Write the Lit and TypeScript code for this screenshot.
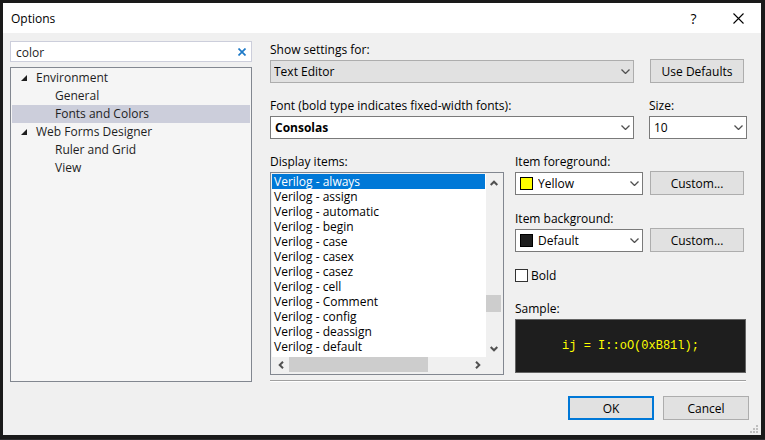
import { LitElement, html, css, svg } from "lit";
import { customElement, property } from "lit/decorators.js";

const chevron = svg`<path d="M0.5 0.5 L4.5 4.5 L8.5 0.5" />`;

@customElement("combo-box")
class ComboBox extends LitElement {
  @property() label = "";
  @property() value = "";
  @property() swatch = "";
  @property({ type: Boolean }) muted = false;
  @property({ type: Boolean }) strong = false;

  static styles = css`
    :host { display: flex; flex-direction: column; gap: 1px; min-width: 0; }
    label { line-height: 18px; white-space: nowrap; }
    .box { position: relative; display: grid; }
    select {
      appearance: none; box-sizing: border-box; width: 100%; height: 23px; margin: 0;
      padding: 0 20px 0 4px; border: 1px solid #7a7a7a; border-radius: 0;
      background: #fff; color: #000; font: inherit; outline: none;
    }
    .muted { background: #e1e1e1; border-color: #adadad; padding-left: 3px; }
    .strong { font-weight: 700; }
    .swatched { padding-left: 22px; }
    .arrow {
      position: absolute; right: 4px; top: 9px; width: 9px; height: 5px;
      fill: none; stroke: #505050; stroke-width: 1.3; pointer-events: none;
    }
    .chip {
      position: absolute; left: 5px; top: 5px; width: 11px; height: 11px;
      border: 1px solid #000; pointer-events: none;
    }
  `;

  render() {
    const cls = [this.muted ? "muted" : "", this.strong ? "strong" : "", this.swatch ? "swatched" : ""].join(" ");
    return html`
      <label for="s">${this.label}</label>
      <div class="box">
        <select id="s" class=${cls}><option>${this.value}</option></select>
        ${this.swatch ? html`<span class="chip" style="background:${this.swatch}"></span>` : ""}
        <svg class="arrow" viewBox="0 0 9 5">${chevron}</svg>
      </div>`;
  }
}

const items = ["always", "assign", "automatic", "begin", "case", "casex", "casez", "cell", "Comment", "config", "deassign", "default"];

const tree = [
  { name: "Environment", children: ["General", "Fonts and Colors"] },
  { name: "Web Forms Designer", children: ["Ruler and Grid", "View"] },
];

@customElement("app-root")
class AppRoot extends LitElement {
  static styles = css`
    :host {
      display: flex; box-sizing: border-box; min-height: 100vh; padding: 3px 4px 4px 3px;
      background: #1a1a1a; border-bottom: 1px solid #2d2d30;
      font: 12px "Open Sans", sans-serif; color: #000;
    }
    .dialog { position: relative; flex: 1; display: flex; flex-direction: column; background: #f0f0f0; min-width: 0; }
    header { display: flex; align-items: center; height: 30px; padding-left: 8px; background: #fff; }
    h1 { flex: 1; margin: 0; font-size: 12px; font-weight: 400; }
    button { font: inherit; color: #000; border-radius: 0; margin: 0; padding: 0; }
    .caption { width: 45px; height: 28px; border: 0; background: none; display: grid; place-items: center; font-size: 14px; }
    .caption svg { fill: none; stroke: #000; stroke-width: 1.1; }
    .body { flex: 1; display: grid; grid-template-columns: 242px 1fr; gap: 18px; padding: 8px 14px 0 7px; }
    .nav { display: flex; flex-direction: column; gap: 5px; }
    .search { display: flex; align-items: center; box-sizing: border-box; height: 21px; border: 1px solid #cccedb; background: #fff; }
    .search input { flex: 1; min-width: 0; border: 0; padding: 1px 0 0 5px; font: inherit; color: #1e1e1e; background: none; outline: none; }
    .clear { display: grid; place-items: center; width: 18px; height: 19px; border: 0; background: none; }
    .clear svg { fill: none; stroke: #1e7ac8; stroke-width: 1.7; }
    .tree { flex: 1; border: 1px solid #828790; background: #f5f5f5; padding: 1px; color: #1e1e1e; }
    .tree ul { list-style: none; margin: 0; padding: 0; }
    .node { display: flex; align-items: center; gap: 9px; height: 18px; line-height: 18px; padding-left: 9px; }
    .leaf { height: 18px; line-height: 18px; padding-left: 43px; }
    .leaf.on { background: #cccedb; }
    .settings { display: flex; flex-direction: column; gap: 5px; min-width: 0; }
    .fields { flex: 1; display: flex; flex-direction: column; gap: 14px; }
    .row { display: grid; grid-template-columns: 1fr 98px; gap: 15px; align-items: end; }
    .push { box-sizing: border-box; height: 24px; border: 1px solid #adadad; background: #e1e1e1; }
    .side { width: 94px; margin-right: 3px; justify-self: end; }
    .lower { display: grid; grid-template-columns: 1fr 232px; gap: 11px; }
    .label { display: block; line-height: 18px; margin-bottom: 1px; }
    .list { display: grid; grid-template-columns: 1fr 15px; grid-template-rows: 183px 15px; border: 1px solid #828790; padding: 1px 2px 2px 1px; background: #f0f0f0; }
    .list ul { list-style: none; margin: 0; padding: 0 1px 0 0; background: #fff; }
    .list li { height: 15px; line-height: 15px; padding-left: 2px; }
    .list li.on { background: #0078d7; color: #fff; }
    .bar { display: flex; }
    .bar.v { flex-direction: column; }
    .bar button { display: grid; place-items: center; width: 17px; height: 15px; border: 0; background: none; }
    .bar.v button { width: 15px; height: 17px; }
    .bar svg { fill: none; stroke: #505050; stroke-width: 2; }
    .track { flex: 1; display: flex; }
    .v .track { flex-direction: column; }
    .before { flex: 104; }
    .thumb { flex: 17; background: #cdcdcd; }
    .after { flex: 28; }
    .h .thumb { flex: 139; }
    .h .after { flex: 41; }
    .style { display: flex; flex-direction: column; gap: 15px; }
    .pair { display: grid; grid-template-columns: 128px 94px; gap: 7px; align-items: end; }
    .check { display: flex; align-items: center; gap: 3px; height: 16px; }
    .check input { appearance: none; box-sizing: border-box; width: 13px; height: 13px; margin: 0; border: 1px solid #333; background: #fff; }
    .sample { margin: auto 1px 2px 0; }
    .preview { box-sizing: border-box; height: 54px; border: 1px solid #646464; background: #1e1e1e; color: #ff0; display: grid; place-items: center; font: 12px "Liberation Mono", monospace; }
    .rule { border: 0; margin: 0 1px 0 0; height: 1px; background: #a0a0a0; border-bottom: 1px solid #fff; }
    footer { display: flex; justify-content: flex-end; gap: 9px; padding: 14px 12px 15px; }
    footer .push { width: 86px; }
    footer .ok { border: 2px solid #0078d7; }
    .grip { position: absolute; right: 3px; bottom: 2px; fill: #bfbfbf; }
  `;

  render() {
    return html`
      <div class="dialog" role="dialog" aria-label="Options">
        <header>
          <h1>Options</h1>
          <button class="caption" aria-label="Help">?</button>
          <button class="caption" aria-label="Close"><svg width="11" height="11"><path d="M0.5 0.5 L10.5 10.5 M10.5 0.5 L0.5 10.5" /></svg></button>
        </header>
        <div class="body">
          <div class="nav">
            <div class="search">
              <input type="text" aria-label="Search options" value="color" />
              <button class="clear" aria-label="Clear search"><svg width="8" height="8"><path d="M0.5 0.5 L7.5 7.5 M7.5 0.5 L0.5 7.5" /></svg></button>
            </div>
            <div class="tree">
              <ul role="tree">
                ${tree.map((n) => html`
                  <li role="treeitem" aria-expanded="true">
                    <div class="node"><svg width="6" height="6"><path d="M6 0 V6 H0 Z" fill="#1e1e1e" /></svg>${n.name}</div>
                    <ul role="group">
                      ${n.children.map((c) => html`<li role="treeitem" class="leaf ${c === "Fonts and Colors" ? "on" : ""}">${c}</li>`)}
                    </ul>
                  </li>`)}
              </ul>
            </div>
          </div>
          <div class="settings">
            <div class="fields">
              <div class="row">
                <combo-box label="Show settings for:" value="Text Editor" muted></combo-box>
                <button class="push side">Use Defaults</button>
              </div>
              <div class="row">
                <combo-box label="Font (bold type indicates fixed-width fonts):" value="Consolas" strong></combo-box>
                <combo-box label="Size:" value="10"></combo-box>
              </div>
              <div class="lower">
                <div>
                  <span class="label" id="items">Display items:</span>
                  <div class="list">
                    <ul role="listbox" aria-labelledby="items">
                      ${items.map((t, i) => html`<li role="option" class=${i === 0 ? "on" : ""} aria-selected=${i === 0}>Verilog - ${t}</li>`)}
                    </ul>
                    <div class="bar v">
                      <button aria-label="Scroll up"><svg width="8" height="6"><path d="M0.7 5 L4 1.7 L7.3 5" /></svg></button>
                      <div class="track"><div class="before"></div><div class="thumb"></div><div class="after"></div></div>
                      <button aria-label="Scroll down"><svg width="8" height="6"><path d="M0.7 1 L4 4.3 L7.3 1" /></svg></button>
                    </div>
                    <div class="bar h">
                      <button aria-label="Scroll left"><svg width="6" height="8"><path d="M5 0.7 L1.7 4 L5 7.3" /></svg></button>
                      <div class="track"><div class="thumb"></div><div class="after"></div></div>
                      <button aria-label="Scroll right"><svg width="6" height="8"><path d="M1 0.7 L4.3 4 L1 7.3" /></svg></button>
                    </div>
                  </div>
                </div>
                <div class="style">
                  <div class="pair">
                    <combo-box label="Item foreground:" value="Yellow" swatch="#ffff00"></combo-box>
                    <button class="push">Custom...</button>
                  </div>
                  <div class="pair">
                    <combo-box label="Item background:" value="Default" swatch="#1e1e1e"></combo-box>
                    <button class="push">Custom...</button>
                  </div>
                  <label class="check"><input type="checkbox" />Bold</label>
                  <div class="sample">
                    <span class="label">Sample:</span>
                    <div class="preview">ij = I::oO(0xB81l);</div>
                  </div>
                </div>
              </div>
            </div>
            <hr class="rule" />
          </div>
        </div>
        <footer>
          <button class="push ok">OK</button>
          <button class="push">Cancel</button>
        </footer>
        <svg class="grip" width="8" height="8"><path d="M6 0h2v2h-2z M3 3h2v2h-2z M6 3h2v2h-2z M0 6h2v2h-2z M3 6h2v2h-2z M6 6h2v2h-2z" /></svg>
      </div>`;
  }
}
